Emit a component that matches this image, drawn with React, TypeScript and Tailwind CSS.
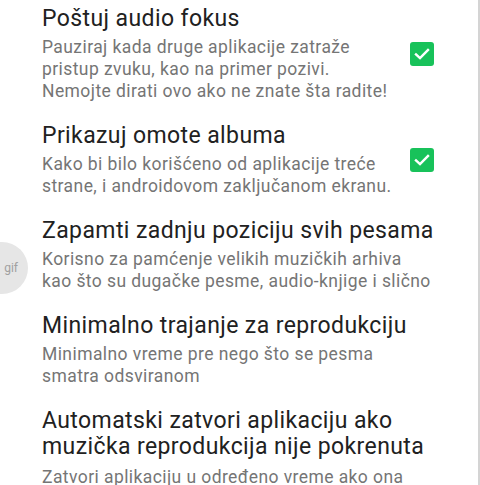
import React from "react";

function Check() {
  return (
    <div className="w-6 h-6 rounded-[3px] bg-[#18c25a] flex items-center justify-center shrink-0">
      <svg width="18" height="18" viewBox="0 0 18 18" fill="none">
        <path d="M3 9.5 L7 13.2 L15 5" stroke="white" strokeWidth="2.4" strokeLinecap="square" />
      </svg>
    </div>
  );
}

type Item = { title: string[]; sub: string[]; check?: boolean };

const items: Item[] = [
  {
    title: ["Poštuj audio fokus"],
    sub: [
      "Pauziraj kada druge aplikacije zatraže",
      "pristup zvuku, kao na primer pozivi.",
      "Nemojte dirati ovo ako ne znate šta radite!",
    ],
    check: true,
  },
  {
    title: ["Prikazuj omote albuma"],
    sub: ["Kako bi bilo korišćeno od aplikacije treće", "strane, i androidovom zaključanom ekranu."],
    check: true,
  },
  {
    title: ["Zapamti zadnju poziciju svih pesama"],
    sub: ["Korisno za pamćenje velikih muzičkih arhiva", "kao što su dugačke pesme, audio-knjige i slično"],
  },
  {
    title: ["Minimalno trajanje za reprodukciju"],
    sub: ["Minimalno vreme pre nego što se pesma", "smatra odsviranom"],
  },
  {
    title: ["Automatski zatvori aplikaciju ako", "muzička reprodukcija nije pokrenuta"],
    sub: ["Zatvori aplikaciju u određeno vreme ako ona", "nije u upotrebi"],
  },
];

export default function App() {
  return (
    <div
      className="relative h-[485px] overflow-hidden bg-white border-r-2 border-[#d4d4d4]"
      style={{ fontFamily: "Roboto, 'Noto Sans', sans-serif" }}
    >
      <div className="flex flex-col gap-[21px] pt-[6px] pl-[42px] pr-[44px]">
        {items.map((it, i) => (
          <div key={i} className="flex items-center">
            <div className="flex-1 min-w-0">
              <div className="text-[23px] leading-[26px] tracking-[0.4px] text-[#212121] whitespace-nowrap">
                {it.title.map((t, j) => (
                  <div key={j}>{t}</div>
                ))}
              </div>
              <div
                className={`${i === 4 ? "mt-[6px]" : "mt-[4px]"} text-[17.5px] leading-[22px] tracking-[0.42px] text-[#757575] whitespace-nowrap`}
              >
                {it.sub.map((t, j) => (
                  <div key={j}>{t}</div>
                ))}
              </div>
            </div>
            {it.check && <Check />}
          </div>
        ))}
      </div>
      <div className="absolute left-[-24px] top-[242px] w-[52px] h-[52px] rounded-full bg-[#e6e6e6] flex items-center justify-end pr-[10px]">
        <span className="text-[12px] text-[#a0a0a0]" style={{ fontFamily: "Roboto, sans-serif" }}>gif</span>
      </div>
    </div>
  );
}
